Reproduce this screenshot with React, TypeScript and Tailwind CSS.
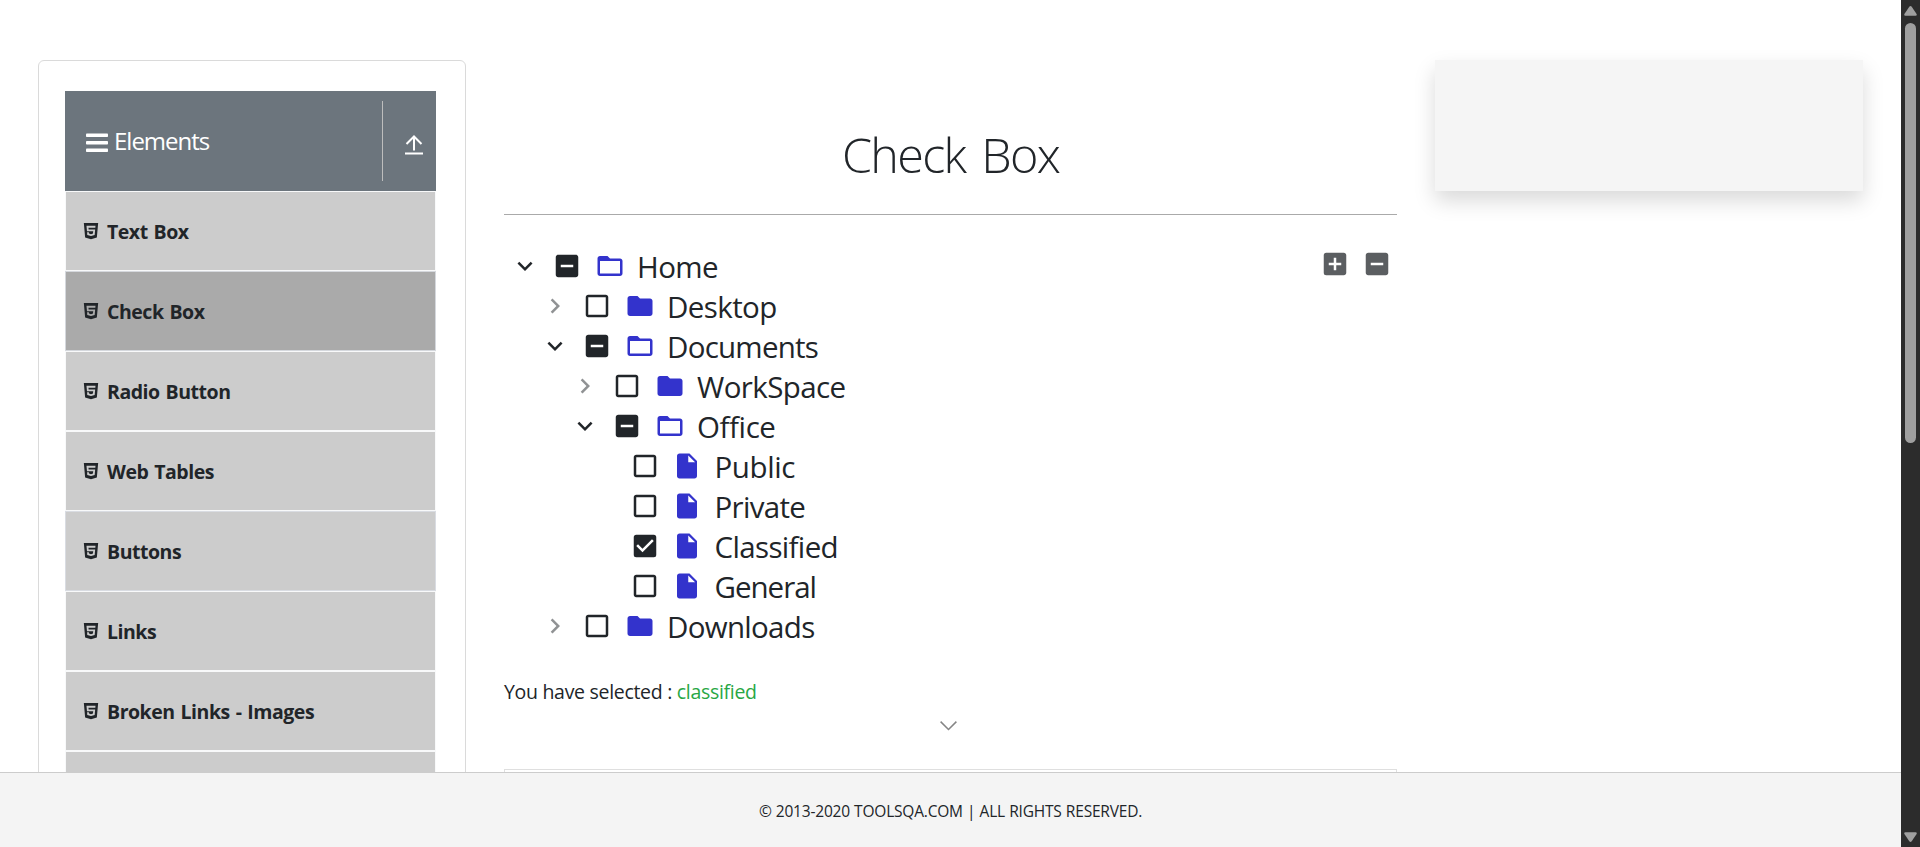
import { AiFillHtml5 } from "react-icons/ai";
import {
  MdAddBox,
  MdCheckBox,
  MdCheckBoxOutlineBlank,
  MdFolder,
  MdFolderOpen,
  MdIndeterminateCheckBox,
  MdInsertDriveFile,
  MdKeyboardArrowDown,
  MdKeyboardArrowRight,
} from "react-icons/md";

type Node = {
  label: string;
  indent: string;
  kind: "open" | "closed" | "file";
  state: "half" | "off" | "on";
  text: string;
};

const nodes: Node[] = [
  { label: "Home", indent: "pl-[6px]", kind: "open", state: "half", text: "tracking-[-0.6px]" },
  { label: "Desktop", indent: "pl-[36px]", kind: "closed", state: "off", text: "tracking-[-0.6px]" },
  { label: "Documents", indent: "pl-[36px]", kind: "open", state: "half", text: "tracking-[-0.75px]" },
  { label: "WorkSpace", indent: "pl-[66px]", kind: "closed", state: "off", text: "tracking-[-0.6px]" },
  { label: "Office", indent: "pl-[66px]", kind: "open", state: "half", text: "tracking-[-0.4px]" },
  { label: "Public", indent: "pl-[126px]", kind: "file", state: "off", text: "tracking-[-0.4px]" },
  { label: "Private", indent: "pl-[126px]", kind: "file", state: "off", text: "tracking-[-0.7px]" },
  { label: "Classified", indent: "pl-[126px]", kind: "file", state: "on", text: "tracking-[-0.65px]" },
  { label: "General", indent: "pl-[126px]", kind: "file", state: "off", text: "tracking-[-1px]" },
  { label: "Downloads", indent: "pl-[36px]", kind: "closed", state: "off", text: "tracking-[-0.7px]" },
];

const items = [
  { label: "Text Box", style: "bg-[#ccc] border-[#f8f9fa]" },
  { label: "Check Box", style: "bg-[#aaa] border-[#d5d8dd]" },
  { label: "Radio Button", style: "bg-[#ccc] border-[#f8f9fa]" },
  { label: "Web Tables", style: "bg-[#ccc] border-[#f8f9fa]" },
  { label: "Buttons", style: "bg-[#ccc] border-[#d9dce2]" },
  { label: "Links", style: "bg-[#ccc] border-[#f8f9fa]" },
  { label: "Broken Links - Images", style: "bg-[#ccc] border-[#f8f9fa]" },
  { label: "", style: "bg-[#ccc] border-[#f8f9fa]" },
];

function TreeRow({ node }: { node: Node }) {
  return (
    <li className={`flex h-10 items-center ${node.indent}`}>
      {node.kind === "open" && <MdKeyboardArrowDown className="mr-3 size-[30px] shrink-0" />}
      {node.kind === "closed" && <MdKeyboardArrowRight className="mr-3 size-[30px] shrink-0 text-[#909294]" />}
      {node.state === "half" && <MdIndeterminateCheckBox className="size-[30px] shrink-0" />}
      {node.state === "off" && <MdCheckBoxOutlineBlank className="size-[30px] shrink-0" />}
      {node.state === "on" && <MdCheckBox className="size-[30px] shrink-0" />}
      {node.kind === "file" ? (
        <MdInsertDriveFile className="mr-[12.5px] ml-3 size-[30px] shrink-0 text-[#33c]" />
      ) : node.kind === "open" ? (
        <MdFolderOpen className="mr-3 ml-[13px] size-[30px] shrink-0 text-[#33c]" />
      ) : (
        <MdFolder className="mr-3 ml-[13px] size-[30px] shrink-0 text-[#33c]" />
      )}
      <span className={`pt-px text-[29.5px] leading-10 whitespace-nowrap ${node.text}`}>{node.label}</span>
    </li>
  );
}

export default function App() {
  return (
    <div className="flex h-[847px] w-full overflow-hidden bg-white font-['Open_Sans','Noto_Sans',sans-serif] text-[#212529]">
      <div className="flex min-w-0 flex-1 flex-col">
        <div className="flex h-[772px] shrink-0 items-start overflow-hidden pt-[60px] pl-[38px]">
          <aside className="h-[900px] w-[428px] shrink-0 rounded-[6px] border border-[#dadada] px-[26px] pt-[30px]">
            <div className="flex h-[100px] w-[371px] items-center bg-[#6c757d] text-white">
              <svg viewBox="0 0 22 20" className="mt-1 ml-[21px] h-5 w-[22px]" fill="currentColor">
                <rect y="0.6" width="22" height="3.4" rx="0.8" />
                <rect y="8.1" width="22" height="3.4" rx="0.8" />
                <rect y="15.6" width="22" height="3.4" rx="0.8" />
              </svg>
              <span className="ml-[6px] flex-1 pb-px text-[24px] leading-8 tracking-[-1px]">Elements</span>
              <div className="flex h-20 w-[54px] items-center border-l border-[#bdbdbd] pl-[22px]">
                <svg viewBox="0 0 18 20" className="mt-[7px] h-5 w-[18px]" fill="none" stroke="currentColor" strokeWidth="2">
                  <path d="M9 15.5V2M1.5 9L9 1.5 16.5 9M0 18.5h18" />
                </svg>
              </div>
            </div>
            <ul className="w-[371px]">
              {items.map((item, i) => (
                <li key={i} className={`flex h-20 items-center border pl-[15px] ${item.style}`}>
                  <AiFillHtml5 className="size-5 shrink-0" />
                  <span className="ml-[6px] pt-[2px] text-[19.5px] font-bold tracking-[-0.47px] whitespace-nowrap [word-spacing:1.3px]">
                    {item.label}
                  </span>
                </li>
              ))}
            </ul>
          </aside>

          <main className="ml-[38px] w-[893px] shrink-0">
            <h1 className="mt-[60px] h-[94px] text-center text-[48.5px] leading-[68px] font-light tracking-[-1.7px] [word-spacing:5px]">Check Box</h1>
            <div className="flex h-[434px] items-start border-t border-[#aaa] pt-[31px]">
              <ul className="flex-1">
                {nodes.map((node) => (
                  <TreeRow key={node.label} node={node} />
                ))}
              </ul>
              <div className="mt-[3px] mr-[5px] flex gap-3 text-[#5b5e61]">
                <MdAddBox className="size-[30px]" />
                <MdIndeterminateCheckBox className="size-[30px]" />
              </div>
            </div>
            <p className="mt-[29px] h-[30px] text-[19.5px] leading-[30px] tracking-[-0.3px]">
              You have selected : <span className="text-[#28a745]">classified</span>
            </p>
            <svg viewBox="0 0 17 10" className="mt-[14px] ml-[436px] h-[10px] w-[17px]" fill="none" stroke="#858585" strokeWidth="1.5">
              <path d="M0.6 0.6L8.5 8.5 16.4 0.6" />
            </svg>
            <div className="mt-[38px] h-20 border border-[#dfdfdf]" />
          </main>

          <div className="ml-[38px] h-[131px] w-[428px] shrink-0 bg-[#f5f5f5] shadow-[0_10px_20px_rgba(0,0,0,0.15)]" />
        </div>
        <footer className="flex h-[75px] items-center justify-center border-t border-[#ccc] bg-[#f4f4f4] pt-1 text-[15.5px] tracking-[-0.2px] [word-spacing:0.4px]">
          © 2013-2020 TOOLSQA.COM | ALL RIGHTS RESERVED.
        </footer>
      </div>
      <div className="flex w-[19px] shrink-0 flex-col items-center bg-[#2c2c2c]">
        <svg viewBox="0 0 13 10" className="mt-[6px] h-[10px] w-[13px] shrink-0" fill="#9f9f9f">
          <path d="M5.3 0.7Q6.5-0.6 7.7 0.7L12.6 8Q13.2 9.8 11.6 9.8H1.4Q-.2 9.8.4 8z" />
        </svg>
        <div className="mt-[7px] h-[420px] w-[11px] shrink-0 rounded-full bg-[#9f9f9f]" />
        <svg viewBox="0 0 13 10" className="mt-[389px] h-[10px] w-[13px] shrink-0" fill="#9f9f9f">
          <path d="M5.3 9.3Q6.5 10.6 7.7 9.3L12.6 2Q13.2 .2 11.6 .2H1.4Q-.2 .2 .4 2z" />
        </svg>
      </div>
    </div>
  );
}
